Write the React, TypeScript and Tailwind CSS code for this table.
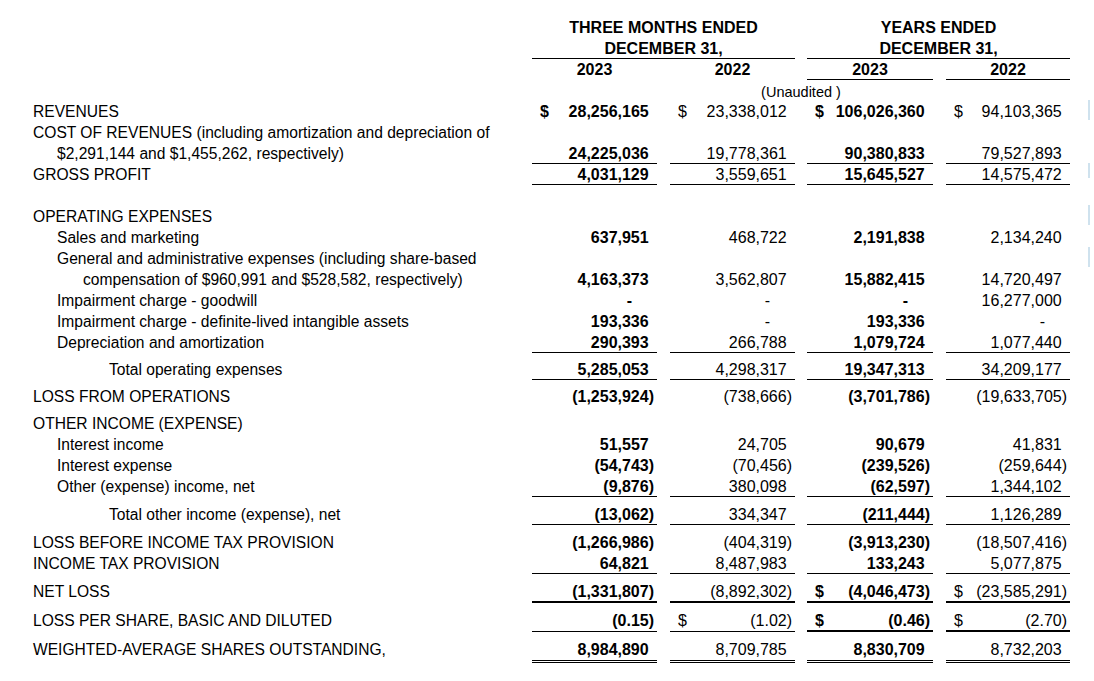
import React from 'react';

// ============================================
// DATA
// ============================================

type Line = 'thin' | 'thick' | 'double' | undefined;

interface Cell {
  v: string;
  dollar?: boolean;
  line?: Line;
}

interface RowDef {
  label?: string;
  indent?: 0 | 1 | 2 | 3;
  cells?: Cell[];
  gap?: string;
  h?: string;
}

const c = (v: string, line?: Line, dollar?: boolean): Cell => ({ v, line, dollar });

const rows: RowDef[] = [
  {
    label: 'REVENUES',
    cells: [c('28,256,165', undefined, true), c('23,338,012', undefined, true), c('106,026,360', undefined, true), c('94,103,365', undefined, true)],
  },
  { label: 'COST OF REVENUES (including amortization and depreciation of' },
  {
    label: '$2,291,144 and $1,455,262, respectively)',
    indent: 1,
    cells: [c('24,225,036', 'thin'), c('19,778,361', 'thin'), c('90,380,833', 'thin'), c('79,527,893', 'thin')],
  },
  {
    label: 'GROSS PROFIT',
    cells: [c('4,031,129', 'thin'), c('3,559,651', 'thin'), c('15,645,527', 'thin'), c('14,575,472', 'thin')],
  },
  {},
  { label: 'OPERATING EXPENSES' },
  {
    label: 'Sales and marketing',
    indent: 1,
    cells: [c('637,951'), c('468,722'), c('2,191,838'), c('2,134,240')],
  },
  { label: 'General and administrative expenses (including share-based', indent: 1 },
  {
    label: 'compensation of $960,991 and $528,582, respectively)',
    indent: 2,
    cells: [c('4,163,373'), c('3,562,807'), c('15,882,415'), c('14,720,497')],
  },
  {
    label: 'Impairment charge - goodwill',
    indent: 1,
    cells: [c('-'), c('-'), c('-'), c('16,277,000')],
  },
  {
    label: 'Impairment charge - definite-lived intangible assets',
    indent: 1,
    cells: [c('193,336'), c('-'), c('193,336'), c('-')],
  },
  {
    label: 'Depreciation and amortization',
    indent: 1,
    cells: [c('290,393', 'thin'), c('266,788', 'thin'), c('1,079,724', 'thin'), c('1,077,440', 'thin')],
  },
  {
    label: 'Total operating expenses',
    indent: 3,
    gap: 'mt-[6px]',
    cells: [c('5,285,053', 'thin'), c('4,298,317', 'thin'), c('19,347,313', 'thin'), c('34,209,177', 'thin')],
  },
  {
    label: 'LOSS FROM OPERATIONS',
    gap: 'mt-[6px]',
    cells: [c('(1,253,924)'), c('(738,666)'), c('(3,701,786)'), c('(19,633,705)')],
  },
  { label: 'OTHER INCOME (EXPENSE)', gap: 'mt-[6px]' },
  {
    label: 'Interest income',
    indent: 1,
    cells: [c('51,557'), c('24,705'), c('90,679'), c('41,831')],
  },
  {
    label: 'Interest expense',
    indent: 1,
    cells: [c('(54,743)'), c('(70,456)'), c('(239,526)'), c('(259,644)')],
  },
  {
    label: 'Other (expense) income, net',
    indent: 1,
    cells: [c('(9,876)', 'thin'), c('380,098', 'thin'), c('(62,597)', 'thin'), c('1,344,102', 'thin')],
  },
  {
    label: 'Total other income (expense), net',
    indent: 3,
    gap: 'mt-[7px]',
    cells: [c('(13,062)', 'thin'), c('334,347', 'thin'), c('(211,444)', 'thin'), c('1,126,289', 'thin')],
  },
  {
    label: 'LOSS BEFORE INCOME TAX PROVISION',
    gap: 'mt-[7px]',
    cells: [c('(1,266,986)'), c('(404,319)'), c('(3,913,230)'), c('(18,507,416)')],
  },
  {
    label: 'INCOME TAX PROVISION',
    cells: [c('64,821', 'thin'), c('8,487,983', 'thin'), c('133,243', 'thin'), c('5,077,875', 'thin')],
  },
  {
    label: 'NET LOSS',
    gap: 'mt-[7px]',
    h: 'h-[22px]',
    cells: [c('(1,331,807)', 'thick'), c('(8,892,302)', 'thick'), c('(4,046,473)', 'thick', true), c('(23,585,291)', 'thick', true)],
  },
  {
    label: 'LOSS PER SHARE, BASIC AND DILUTED',
    gap: 'mt-[7px]',
    h: 'h-[22px]',
    cells: [c('(0.15)', 'thin'), c('(1.02)', 'thin', true), c('(0.46)', 'thick', true), c('(2.70)', 'thick', true)],
  },
  {
    label: 'WEIGHTED-AVERAGE SHARES OUTSTANDING,',
    gap: 'mt-[7px]',
    h: 'h-[24px]',
    cells: [c('8,984,890', 'double'), c('8,709,785', 'double'), c('8,830,709', 'double'), c('8,732,203', 'double')],
  },
];

// column offsets (col1 starts at 532)
const colClass = ['w-[125px]', 'ml-[13px] w-[125px]', 'ml-[12px] w-[126px]', 'ml-[13px] w-[124px]'];
const indentClass = ['pl-[33px]', 'pl-[57px]', 'pl-[83px]', 'pl-[109px]'];

// ============================================
// CELLS
// ============================================

function ValueCell({ cell, col, h }: { cell: Cell; col: number; h: string }) {
  const bold = col === 0 || col === 2;
  const neg = cell.v.startsWith('(');
  const dash = cell.v === '-';
  const line =
    cell.line === 'thin'
      ? 'border-b border-black'
      : cell.line === 'thick'
      ? 'border-b-2 border-black'
      : cell.line === 'double'
      ? 'border-b-[3px] border-double border-black'
      : '';
  return (
    <div className={`${colClass[col]} ${h} ${line} flex justify-between text-[16px] leading-[21px] ${bold ? 'font-bold' : ''}`}>
      <span className="pl-[8px]">{cell.dollar ? '$' : ''}</span>
      <span className={dash ? 'pr-[25px]' : 'pr-[3px]'}>
        {cell.v}
        {!neg && !dash && <span className="invisible">)</span>}
      </span>
    </div>
  );
}

function Row({ row }: { row: RowDef }) {
  const h = row.h ?? 'h-[21px]';
  return (
    <div className={`flex ${row.gap ?? ''}`}>
      <div className={`w-[532px] shrink-0 ${h} ${indentClass[row.indent ?? 0]} text-[15.6px] leading-[21px] whitespace-nowrap`}>
        {row.label ?? ''}
      </div>
      {row.cells?.map((cell, i) => (
        <ValueCell key={i} cell={cell} col={i} h={h} />
      ))}
    </div>
  );
}

// ============================================
// MAIN
// ============================================

export default function App() {
  return (
    <div className="relative w-[1094px] h-[681px] overflow-hidden bg-white text-black font-['Liberation_Sans',Arial,sans-serif] pt-[17px]">
      {/* Column headers */}
      <div className="flex">
        <div className="w-[532px] shrink-0" />
        <div className="w-[263px] text-center font-bold text-[16px] leading-[21px]">
          <div className="h-[21px]">THREE MONTHS ENDED</div>
          <div className="h-[21px] border-b border-black">DECEMBER 31,</div>
        </div>
        <div className="ml-[12px] w-[263px] text-center font-bold text-[16px] leading-[21px]">
          <div className="h-[21px]">YEARS ENDED</div>
          <div className="h-[21px] border-b border-black">DECEMBER 31,</div>
        </div>
      </div>
      <div className="flex font-bold text-[16px] leading-[21px]">
        <div className="w-[532px] shrink-0" />
        <div className="w-[125px] h-[21px] text-center">2023</div>
        <div className="ml-[13px] w-[125px] h-[21px] text-center">2022</div>
        <div className="ml-[12px] w-[126px] h-[21px] text-center border-b border-black">2023</div>
        <div className="ml-[13px] w-[124px] h-[21px] text-center border-b border-black">2022</div>
      </div>
      <div className="flex">
        <div className="w-[532px] shrink-0" />
        <div className="w-[538px] h-[21px] text-center text-[14.5px] leading-[24px]">(Unaudited )</div>
      </div>

      {/* Body */}
      {rows.map((row, i) => (
        <Row key={i} row={row} />
      ))}

      {/* faint edge marks */}
      <div className="absolute left-[1088px] top-[100px] w-[2px] h-[20px] bg-[#cfe2ee]" />
      <div className="absolute left-[1088px] top-[163px] w-[2px] h-[15px] bg-[#cfe2ee]" />
      <div className="absolute left-[1088px] top-[205px] w-[2px] h-[20px] bg-[#cfe2ee]" />
      <div className="absolute left-[1088px] top-[247px] w-[2px] h-[20px] bg-[#cfe2ee]" />
    </div>
  );
}
